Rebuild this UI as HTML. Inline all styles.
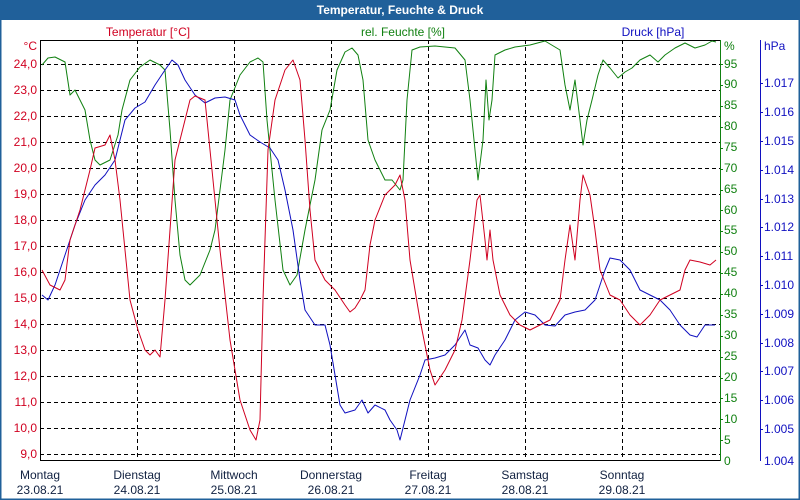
<!DOCTYPE html>
<html><head><meta charset="utf-8"><style>
html,body{margin:0;padding:0;background:#fff}
svg{display:block}
text{font-family:"Liberation Sans","DejaVu Sans",sans-serif;font-size:12px}
</style></head><body>
<svg width="800" height="500" xmlns="http://www.w3.org/2000/svg">
<rect x="0" y="0" width="800" height="500" fill="#fff"/>
<rect x="0" y="0" width="800" height="20" fill="#20609a"/>
<rect x="0.5" y="0.5" width="799" height="499" fill="none" stroke="#20609a" stroke-width="2"/>
<text x="400" y="14" text-anchor="middle" fill="#fff" font-weight="bold" style="font-size:12px">Temperatur, Feuchte &amp; Druck</text>
<text x="148" y="36" text-anchor="middle" fill="#d00020">Temperatur [°C]</text>
<text x="403" y="36" text-anchor="middle" fill="#108010">rel. Feuchte [%]</text>
<text x="653" y="36" text-anchor="middle" fill="#1010c0">Druck [hPa]</text>
<g stroke="#000" stroke-width="1" stroke-dasharray="4,3" fill="none">
<path d="M40 64.5H720M40 90.5H720M40 116.5H720M40 142.5H720M40 168.5H720M40 194.5H720M40 220.5H720M40 246.5H720M40 272.5H720M40 298.5H720M40 324.5H720M40 350.5H720M40 376.5H720M40 402.5H720M40 428.5H720M40 454.5H720"/>
<path d="M137.5 40V460M234.5 40V460M331.5 40V460M428.5 40V460M525.5 40V460M622.5 40V460"/>
</g>
<path d="M40.5 40V461M40 460.5H721M40 40.5H721" stroke="#000" fill="none"/>
<path d="M720.5 40V461" stroke="#108010" fill="none"/>
<path d="M760.5 40V461" stroke="#1010c0" fill="none"/>
<g fill="#d00020" text-anchor="end" style="font-size:11.5px">
<text x="37" y="50">°C</text>
<text x="37" y="68">24,0</text><text x="37" y="94">23,0</text><text x="37" y="120">22,0</text><text x="37" y="146">21,0</text><text x="37" y="172">20,0</text><text x="37" y="198">19,0</text><text x="37" y="224">18,0</text><text x="37" y="250">17,0</text><text x="37" y="276">16,0</text><text x="37" y="302">15,0</text><text x="37" y="328">14,0</text><text x="37" y="354">13,0</text><text x="37" y="380">12,0</text><text x="37" y="406">11,0</text><text x="37" y="432">10,0</text><text x="37" y="458">9,0</text>
</g>
<g fill="#108010" style="font-size:11.5px">
<text x="724" y="50">%</text>
<text x="724" y="68">95</text><text x="724" y="88">90</text><text x="724" y="109">85</text><text x="724" y="130">80</text><text x="724" y="151">75</text><text x="724" y="172">70</text><text x="724" y="193">65</text><text x="724" y="214">60</text><text x="724" y="234">55</text><text x="724" y="255">50</text><text x="724" y="276">45</text><text x="724" y="297">40</text><text x="724" y="318">35</text><text x="724" y="339">30</text><text x="724" y="360">25</text><text x="724" y="381">20</text><text x="724" y="402">15</text><text x="724" y="423">10</text><text x="724" y="444">5</text><text x="724" y="465">0</text>
</g>
<g stroke="#108010"><path d="M720 64.5h3M720 85.5h3M720 106.5h3M720 127.5h3M720 148.5h3M720 169.5h3M720 190.5h3M720 210.5h3M720 231.5h3M720 252.5h3M720 273.5h3M720 294.5h3M720 315.5h3M720 336.5h3M720 357.5h3M720 378.5h3M720 398.5h3M720 419.5h3M720 440.5h3"/></g>
<g fill="#1010c0" style="font-size:11.5px">
<text x="764" y="50">hPa</text>
<text x="764" y="87">1.017</text><text x="764" y="116">1.016</text><text x="764" y="145">1.015</text><text x="764" y="174">1.014</text><text x="764" y="203">1.013</text><text x="764" y="231">1.012</text><text x="764" y="260">1.011</text><text x="764" y="289">1.010</text><text x="764" y="318">1.009</text><text x="764" y="347">1.008</text><text x="764" y="375">1.007</text><text x="764" y="404">1.006</text><text x="764" y="433">1.005</text><text x="764" y="465">1.004</text>
</g>
<g stroke="#1010c0"><path d="M760 83.5h3M760 112.5h3M760 141.5h3M760 170.5h3M760 199.5h3M760 227.5h3M760 256.5h3M760 285.5h3M760 314.5h3M760 343.5h3M760 371.5h3M760 400.5h3M760 429.5h3"/></g>
<g fill="#102040" text-anchor="middle" style="font-size:11.5px">
<text x="40" y="479">Montag</text><text x="40" y="494">23.08.21</text>
<text x="137" y="479">Dienstag</text><text x="137" y="494">24.08.21</text>
<text x="234" y="479">Mittwoch</text><text x="234" y="494">25.08.21</text>
<text x="331" y="479">Donnerstag</text><text x="331" y="494">26.08.21</text>
<text x="428" y="479">Freitag</text><text x="428" y="494">27.08.21</text>
<text x="525" y="479">Samstag</text><text x="525" y="494">28.08.21</text>
<text x="622" y="479">Sonntag</text><text x="622" y="494">29.08.21</text>
</g>
<g fill="none" stroke-width="1" stroke-linejoin="round">
<polyline stroke="#108010" points="42,65 48,58 55,57 65,62 70,95 75,90 80,100 85,110 90,140 95,160 100,165 110,160 118,135 122,110 130,80 140,67 150,60 160,65 165,70 170,130 175,200 180,255 185,280 190,285 200,275 210,250 215,230 220,190 225,150 230,100 240,75 250,62 258,58 263,62 267,120 275,200 283,270 290,285 297,275 305,230 315,180 322,130 330,110 337,70 345,52 352,48 358,55 363,80 368,140 375,160 385,180 392,180 400,190 403,180 407,100 412,50 420,47 435,46 455,48 465,60 470,100 475,150 478,180 483,140 486,80 489,120 492,100 495,55 505,50 515,47 530,45 545,41 560,50 565,85 570,110 575,80 580,120 583,145 587,120 592,100 598,75 603,60 610,68 618,78 625,72 632,68 640,60 650,55 658,62 665,55 675,48 685,43 695,48 705,45 712,41 716,42"/>
<polyline stroke="#1010c0" points="42,295 48,300 55,285 65,255 75,225 85,200 95,185 105,175 115,160 120,140 125,120 135,108 145,102 155,85 165,70 172,60 178,65 185,80 195,95 205,103 215,98 225,97 235,100 240,115 250,135 260,142 270,148 278,160 285,190 293,230 300,280 305,310 315,325 325,325 330,345 335,375 340,405 345,413 355,410 362,400 368,413 375,405 385,410 390,420 397,430 400,440 405,420 410,400 420,375 425,360 435,358 445,355 455,345 465,330 470,345 478,348 485,360 490,365 495,355 505,340 515,320 525,312 535,315 545,325 555,326 565,315 575,312 585,310 595,300 600,285 605,270 610,258 620,260 630,270 640,290 650,295 660,300 670,310 680,325 690,335 697,337 705,325 715,325"/>
<polyline stroke="#d00020" points="42,270 50,285 60,290 65,280 70,240 80,210 90,170 95,148 105,145 110,135 115,160 120,200 125,250 130,300 138,330 145,350 150,355 155,350 160,357 165,300 170,230 175,160 180,140 185,120 190,100 195,96 205,100 210,150 220,250 230,340 240,400 250,430 256,440 260,420 263,300 268,150 275,100 285,70 293,60 300,80 305,140 310,210 315,260 325,280 335,290 345,305 350,312 355,308 360,300 365,290 370,245 375,220 385,195 395,185 400,175 405,200 410,260 420,320 430,370 435,385 445,370 455,350 462,320 470,260 477,200 480,195 485,240 487,260 490,230 493,260 500,295 510,315 520,325 530,330 540,325 550,320 560,300 565,260 570,225 575,260 580,200 583,175 590,195 595,230 600,270 610,295 620,300 630,315 640,325 650,315 660,300 670,295 680,290 685,270 690,260 700,262 710,265 716,260"/>
</g>
</svg>
</body></html>
